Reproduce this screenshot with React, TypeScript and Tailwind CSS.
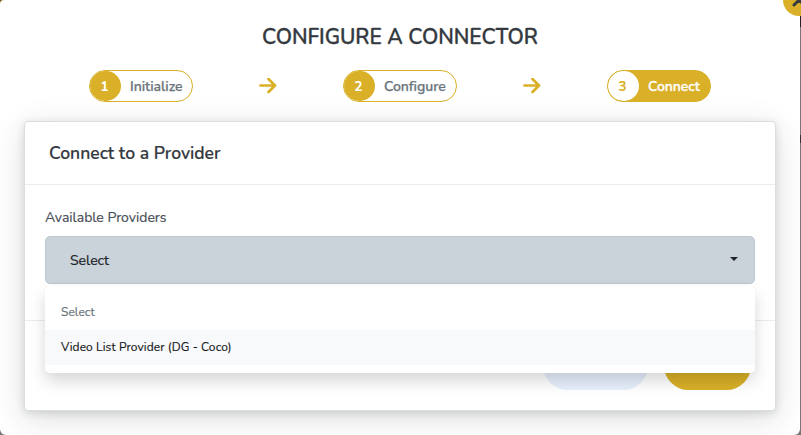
import React from 'react';

type StepProps = { number: number; label: string; width: string; active?: boolean };

function Step({ number, label, width, active }: StepProps) {
  return (
    <div className={`flex h-8 items-center overflow-hidden rounded-full border border-[#d9b028] ${width} ${active ? 'bg-[#d9b028] text-white' : 'bg-white text-[#6c757d]'}`}>
      <span className={`flex h-[30px] w-[31px] shrink-0 items-center justify-center rounded-full pr-0.5 pt-px text-sm font-bold ${active ? 'bg-white text-[#d9b028]' : 'bg-[#d9b028] text-white'}`}>
        {number}
      </span>
      <span className={`ml-[9px] whitespace-nowrap pt-px text-sm font-semibold tracking-[-0.05px] ${active ? '[-webkit-text-stroke:0.3px_#ffffff]' : '[-webkit-text-stroke:0.25px_#6c757d]'}`}>{label}</span>
    </div>
  );
}

function Arrow() {
  return (
    <svg className="h-4 w-[18px]" viewBox="0 0 18 16" fill="none" stroke="#d9b028" strokeWidth="2.7" strokeLinecap="round" strokeLinejoin="round">
      <path d="M1.500 7.500h14.500M9.500 1l6.500 6.500-6.500 6.500" />
    </svg>
  );
}

export default function App() {
  return (
    <div className="relative h-[435px] w-[801px] overflow-hidden bg-[#777777] font-['Nunito','Lato',sans-serif]">
      <div className="absolute left-0 top-0 h-1 w-1 bg-[#765f13]" />
      <div className="absolute right-0 top-4 h-[11px] w-px bg-[#222222]" />
      <div className="absolute right-0 top-[135px] h-2 w-px bg-[#333333]" />
      <main className="relative h-[435px] w-[800px] overflow-hidden rounded-b-md rounded-tl-sm bg-white pt-6">
        <h1 className="ml-[262px] h-[26px] whitespace-nowrap text-[21px] font-semibold leading-[26px] tracking-[-0.04px] text-[#343a40] [-webkit-text-stroke:0.3px_#343a40]">CONFIGURE A CONNECTOR</h1>
        <div className="ml-[89px] mt-5 flex w-[622px] items-center justify-between">
          <Step number={1} label="Initialize" width="w-[104px]" />
          <Arrow />
          <Step number={2} label="Configure" width="w-[114px]" />
          <Arrow />
          <Step number={3} label="Connect" width="w-[104px]" active />
        </div>
        <section className="ml-6 mt-[19px] h-[290px] w-[752px] rounded border border-[#dcdddf] bg-white shadow-[0_8px_32px_rgba(33,37,41,0.15),0_2px_8px_rgba(33,37,41,0.15)]">
          <header className="flex h-[63px] items-center border-b border-[#ececee] pl-6">
            <h2 className="whitespace-nowrap text-[17.500px] font-semibold text-[#343a40] [-webkit-text-stroke:0.15px_#343a40]">Connect to a Provider</h2>
          </header>
          <div className="h-[136px] border-b border-[#ececee] px-5 pt-[23px]">
            <div className="h-7 whitespace-nowrap text-sm leading-5 text-[#495057] [-webkit-text-stroke:0.2px_#495057]">Available Providers</div>
            <div className="relative">
              <button className="flex h-12 w-[710px] items-center justify-between rounded-[5px] border border-[#bdc8d1] bg-[#cad2da] pl-6 pr-4 text-sm text-[#212529]">
                <span className="pt-px [-webkit-text-stroke:0.2px_#212529]">Select</span>
                <svg className="-mt-0.5 h-1 w-2" viewBox="0 0 8 4" fill="#212529"><path d="M0 0h8L4 4z" /></svg>
              </button>
              <div className="absolute left-0 top-[50px] z-10 h-[87px] w-[710px] rounded-[5px] bg-white pt-2 text-xs shadow-[0_8px_16px_rgba(0,0,0,0.16)]">
                <div className="flex h-9 items-center px-4 tracking-[0.04px] text-[#6c757d] [-webkit-text-stroke:0.2px_#6c757d]">Select</div>
                <div className="flex h-[35px] items-center bg-[#f8f9fa] px-4 pb-px tracking-[0.1px] text-[#16181b] [-webkit-text-stroke:0.15px_#16181b]"><span>Video List Provider (DG - Coco)</span></div>
              </div>
            </div>
          </div>
          <footer className="flex justify-end gap-4 pr-[24px] pt-5">
            <div className="h-[49px] w-[105px] rounded-full bg-[#e7f0fd]" />
            <div className="h-[49px] w-[87px] rounded-full bg-[#d9b028]" />
          </footer>
        </section>
      </main>
      <div className="absolute -top-4 left-[783px] h-8 w-8 rounded-full bg-[#d9b028]">
        <svg className="absolute left-[9px] top-[9px] h-3.5 w-3.5" viewBox="0 0 14 14" stroke="#343a40" strokeWidth="3" strokeLinecap="round"><path d="m2 2 10 10M12 2 2 12" /></svg>
      </div>
    </div>
  );
}
